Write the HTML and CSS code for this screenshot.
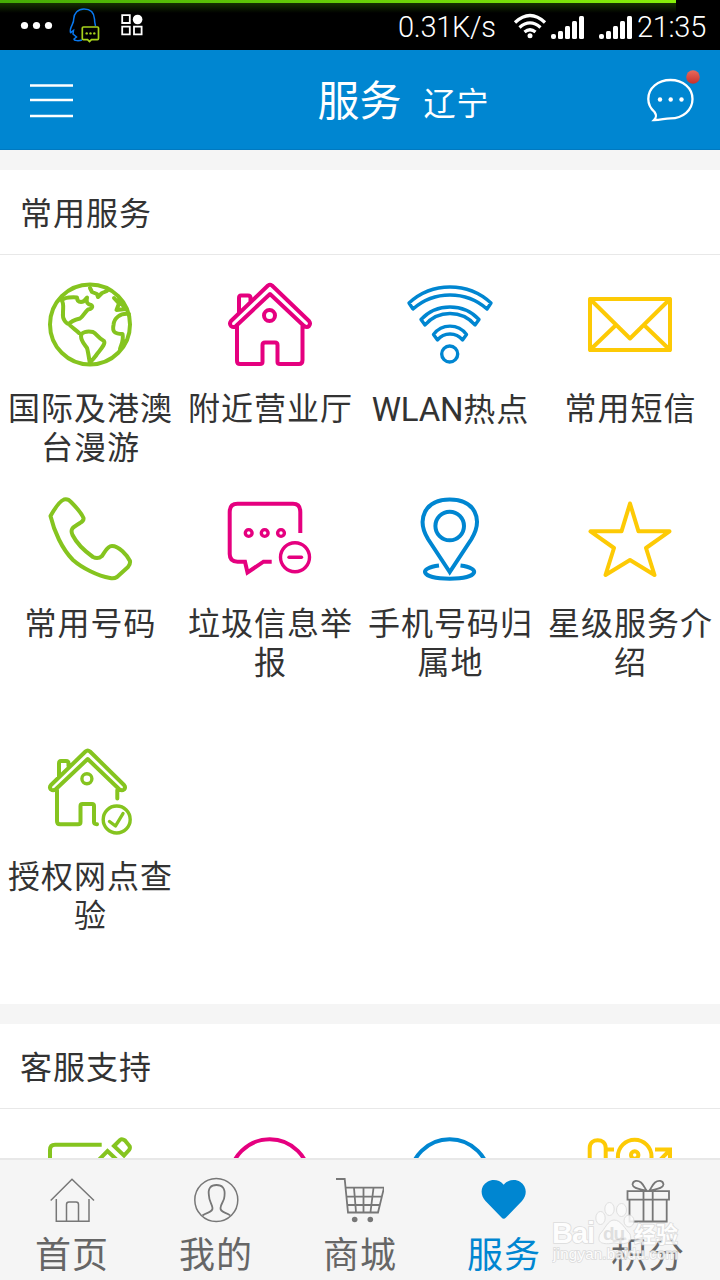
FILE: index.html
```html
<!DOCTYPE html>
<html lang="zh-CN">
<head>
<meta charset="utf-8">
<title>服务</title>
<link rel="stylesheet" href="styles.css">
</head>
<body>
<div class="screen">
  <div class="status">
    <div class="progress"></div>
    <svg class="notices" width="150" height="50" viewBox="0 0 150 50">
      <g fill="#fff"><circle cx="24.5" cy="25.5" r="3.6"/><circle cx="36.5" cy="25.5" r="3.6"/><circle cx="48.5" cy="25.5" r="3.6"/><circle cx="137.6" cy="19.5" r="4.8"/></g>
      <path d="M95.500 26C95 24 94.500 22 94.500 19C94 12 89.500 9 84 9C78 9 74 13 73.700 19C74 23 71.500 25 70.500 29C70 32 70.500 34 71.500 32L73.500 30.500L73 34L76.500 37L74 39C74 41 79 41 82 40" fill="none" stroke="#0878f0" stroke-width="1.500"/>
      <path d="M83.500 27H97.500Q98.500 27 98.500 28V38.500Q98.500 39.700 97.500 39.700H91.500L89.500 41.500L87.500 39.700H83.500Q82.300 39.700 82.300 38.500V28Q82.300 27 83.500 27Z" fill="#000" stroke="#a6d21c" stroke-width="1.700"/>
      <g fill="#a6d21c"><circle cx="86.700" cy="33.400" r="1.200"/><circle cx="90.500" cy="33.400" r="1.200"/><circle cx="94.300" cy="33.400" r="1.200"/></g>
      <path d="M122.200 15.200h7.600v7.800h-7.600ZM122.200 26.700h7.600v7.600h-7.600ZM134 26.700h7.600v7.600h-7.600Z" fill="none" stroke="#fff" stroke-width="1.800"/>
    </svg>
    <div class="status-right">
      <span class="speed">0.31K/s</span>
      <svg class="wifi" width="34" height="26" viewBox="0 0 34 26" fill="none" stroke="#fff" stroke-width="3.300">
        <path d="M2 9.500Q17 -4.500 32 9.500M6.500 14.500Q17 5.300 27.500 14.500M11.500 19Q17 14.500 22.500 19"/><circle cx="17" cy="22.800" r="2.500" fill="#fff" stroke="none"/>
      </svg>
      <svg class="signal" width="34" height="24" viewBox="0 0 34 24" fill="#fff">
        <rect x="0" y="19" width="5" height="5" rx="2"/><rect x="7" y="16" width="5" height="8" rx="1.500"/><rect x="14" y="11" width="5" height="13" rx="1.500"/><rect x="21" y="6" width="5" height="18" rx="1.500"/><rect x="28" y="1" width="5" height="23" rx="1.500"/>
      </svg>
      <svg class="signal second" width="34" height="24" viewBox="0 0 34 24" fill="#fff">
        <rect x="0" y="19" width="5" height="5" rx="2"/><rect x="7" y="16" width="5" height="8" rx="1.500"/><rect x="14" y="11" width="5" height="13" rx="1.500"/><rect x="21" y="6" width="5" height="18" rx="1.500"/><rect x="28" y="1" width="5" height="23" rx="1.500"/>
      </svg>
      <span class="clock">21:35</span>
    </div>
  </div>

  <header class="header">
    <svg class="menu" width="44" height="36" viewBox="0 0 44 36"><path d="M0 2.500H43M0 17H43M0 33H43" stroke="#fff" stroke-width="2.500"/></svg>
    <div class="heading"><h1 class="title">服务</h1><span class="region">辽宁</span></div>
    <svg class="chat" width="56" height="54" viewBox="0 0 56 54">
      <defs><linearGradient id="dot" x2="0" y2="1"><stop offset="0" stop-color="#ea6a5c"/><stop offset="1" stop-color="#c6302b"/></linearGradient></defs>
      <path d="M9 50C12 47 11.500 45 9.500 42C5 38 3.300 34 3.300 29C3.300 18 13 10 25.500 10C38 10 47.500 18 47.500 29C47.500 40 38 48.300 25.500 48.300C19 48.500 16 50 9 50Z" fill="none" stroke="#fff" stroke-width="2.300"/>
      <g fill="#fff"><circle cx="15" cy="29.500" r="2.200"/><circle cx="25.700" cy="29.500" r="2.200"/><circle cx="36.500" cy="29.500" r="2.200"/></g>
      <circle cx="48" cy="7" r="6.800" fill="url(#dot)"/>
    </svg>
  </header>

  <main class="content">
    <section class="panel">
      <h2 class="panel-title">常用服务</h2>
      <div class="grid">
        <div class="item"><svg class="icon green" viewBox="0 0 100 100">
          <circle cx="50" cy="49.500" r="40"/>
          <path d="M22 26C23 22 34 22 37 22.500C37 25 38 27 41 27C45 27 45 24 47 22.500C46 27 47 29 51 30C54 32 51 34 48 34.500C44 38 43 42 40 43.500C34 45 31 46 29 49C27 49 22 45 23 38C23 32 24 29 22 26M29 49C31 52 36 55 39 58M41 61C41 57 47 56 53 57C57 59 58 63 64 66C66 69 60 75 57 79C55 83 50 86 50 89C49 83 48 76 47 73C44 69 41 66 41 61ZM50 13L52 17L57 19L58 22L62 18L67 16M74 23L79 28.500L76.500 35L86 34L78 25M89 39C80 38 74 43 73.500 50C72 57 75 59 82.500 59C84 66 81 70 80 74L86 66"/></svg><div class="label">国际及港澳台漫游</div></div>
        <div class="item"><svg class="icon pink" viewBox="0 0 100 100">
          <path d="M52 10.500Q50 9 48 10.500L11 46Q9 48.500 11 51Q13.500 53 16 51L50 19L84 51Q87 53 89 51Q91 48.500 89 46ZM17 51V86Q17 89 20 89H40Q42.500 89 42.500 87V70Q42.500 67.500 45 67.500H55Q57.500 67.500 57.500 70V87Q57.500 89 60 89H79Q82.500 89 82.500 85V51M19 38V23Q19 20.500 21 20.500H28Q30.500 20.500 30.500 23V27"/><circle cx="49.500" cy="40.500" r="5.500"/></svg><div class="label">附近营业厅</div></div>
        <div class="item"><svg class="icon blue" viewBox="0 0 100 100" >
          <path class="thin" d="M9 28A60.500 60.500 0 0 1 91 28L87 34A56 56 0 0 0 13 34ZM21 44.500A40 40 0 0 1 79 44.500L75 50A33 33 0 0 0 25 50ZM33.500 59.500A20.500 20.500 0 0 1 66.500 59.500L62.500 65A16 16 0 0 0 37.500 65Z"/><circle class="thin" cx="49.700" cy="79" r="8"/></svg><div class="label"><span class="latin">WLAN</span>热点</div></div>
        <div class="item"><svg class="icon yellow" viewBox="0 0 100 100">
          <path d="M10 24H90V75H10ZM10 24L50 63.500L90 24M10 75L36 50M90 75L64 50"/></svg><div class="label">常用短信</div></div>

        <div class="item"><svg class="icon green" viewBox="0 0 100 100">
          <path d="M10.500 26C15 18 20 11 24 9.500Q28 8.500 31 12C36 17 41 22 43.500 28Q44 31 40 33C34 37 29.500 38 32.500 45C37 54 46 62 53 67Q58 69.500 62 66C65 62 67 56 72 56C79 56 87 65 90 71Q90.500 74 88 77L77 87Q74 89 70 88C58 86 42 78 33 70C22 59 14 41 10.500 26Z"/></svg><div class="label">常用号码</div></div>
        <div class="item"><svg class="icon pink" viewBox="0 0 100 100">
          <path class="flat" d="M80.300 43V22Q80.300 13.800 73 13.800H17.500Q9.700 13.800 9.700 22V64Q9.700 71.700 17.500 71.700H25L27.500 82.500L43.500 71.700H51.700"/><circle class="thin" cx="28.700" cy="43" r="3.400"/><circle class="thin" cx="44.700" cy="43" r="3.400"/><circle class="thin" cx="61" cy="43" r="3.400"/><circle class="thin" cx="75" cy="67.300" r="14.500"/><path class="thin" d="M69 67.300H81.500"/></svg><div class="label">垃圾信息举报</div></div>
        <div class="item"><svg class="icon blue" viewBox="0 0 100 100">
          <path class="flat" d="M49.700 82L28 49C16 29 25 9.500 49.700 9.500C75 9.500 83.500 29 71.500 49ZM39 75.500C18 78 20 88.700 49.700 88.700C79 88.700 81 78 60.500 75.500"/><circle cx="49.700" cy="36" r="14.300"/></svg><div class="label">手机号码归属地</div></div>
        <div class="item"><svg class="icon yellow" viewBox="0 0 100 100">
          <path d="M50 13.500L58.500 41.300H89.500L66 58L74.500 85L50 70L25.500 85L34 58L10.500 41.300H41.500Z"/></svg><div class="label">星级服务介绍</div></div>

        <div class="item"><svg class="icon green" viewBox="0 0 100 100">
          <path d="M50 8.500Q47.700 6.500 45.500 8.500L11 42Q9 44.500 11 46.500Q13 48 15.500 46.500L47.700 16L79.500 46.500Q82 48 84 46.500Q86 44.500 84 42ZM17 47V78Q17 81.300 20 81.300H38Q40.500 81.300 40.500 79V63Q40.500 61 42.500 61H52Q54 61 54 63V79Q54 81 57 81.300M77.300 47V55.500M19 34V20.500Q19 18 21 18H26Q28.500 18 28.500 20.500V23"/><circle class="thin" cx="46.900" cy="35.700" r="5"/><circle class="thin" cx="76.700" cy="76.500" r="13.500"/><path class="thin" d="M69.500 78.500L75.500 83L83 70.500"/></svg><div class="label">授权网点查验</div></div>
      </div>
    </section>

    <section class="panel">
      <h2 class="panel-title">客服支持</h2>
      <div class="grid">
        <div class="item"><svg class="icon green" viewBox="0 0 100 100">
          <path class="flat" d="M61.700 15.700H15Q10 15.700 10 21V80H80V50M74 17L80 11Q82 9.500 85 11.500L89.500 17Q90.500 19 89 21L84 26.500ZM40 50L67.500 22L78 32L50 60Z"/></svg></div>
        <div class="item"><svg class="icon pink" viewBox="0 0 100 100"><circle cx="49.700" cy="50" r="39.700"/></svg></div>
        <div class="item"><svg class="icon blue" viewBox="0 0 100 100"><circle cx="49.700" cy="50" r="39.700"/></svg></div>
        <div class="item"><svg class="icon yellow" viewBox="0 0 100 100">
          <path class="flat" d="M9.700 60V19C9.700 8.500 25.700 8.500 25.700 19V60M27 20.500H34M75 20.500H90V34M80 31L89 22"/><circle cx="54.700" cy="27.500" r="16.800"/><circle cx="54.700" cy="26" r="3.700"/></svg></div>
      </div>
    </section>
  </main>

  <nav class="tabs">
    <div class="tab"><svg class="tab-icon" viewBox="0 0 48 48"><path d="M2.700 24.500L24 3.300L46 24.500M8.300 23V45.300H41V23M18.500 45V28.500Q18.500 26 21 26H28Q30.500 26 30.500 28.500V45"/></svg><span>首页</span></div>
    <div class="tab"><svg class="tab-icon" viewBox="0 0 48 48"><circle cx="24.300" cy="24" r="21.500"/><path class="bold" d="M10.500 39.500C14 36 21 37 20.500 32C20 28 17 25 17 20C15.500 12 19 9 24.500 9C30 9 33.500 12 32.500 20C32.500 25 29 27 28.500 32C28 37 35 36 38.300 39.500"/></svg><span>我的</span></div>
    <div class="tab"><svg class="tab-icon" viewBox="0 0 48 48"><path class="bold" d="M0 3H8.700L12 36.500H42L48 11.700H10M10.500 20.700H46M11.500 29H44M18 12L20 36M27.500 12V36M37.500 12L34.500 36"/><circle cx="18.700" cy="43.500" r="2.800" fill="#777" stroke="none"/><circle cx="34.300" cy="43.500" r="2.800" fill="#777" stroke="none"/></svg><span>商城</span></div>
    <div class="tab active"><svg class="tab-icon" viewBox="0 0 48 48"><path d="M23.700 8.700C28 3 36 3 40 5.700C47 10 47.500 19 42 25L26 41.500Q23.700 44 21.500 41.500L5.500 25C0 19 0 10 7.500 5.700C12 3 19 3 23.700 8.700Z" fill="#0086d1" stroke="none"/></svg><span>服务</span></div>
    <div class="tab"><svg class="tab-icon" viewBox="0 0 48 48"><path class="bold" d="M3.500 15.200H45V23.700H3.500ZM5.500 24V45.500H42.700V24M19.500 15.500V45.500M28.700 15.500V45.500M23 15C18 13 9 13 8.500 8.500C9 4 14 4 17 6.500C20 9 21 13 23 15M25 15C30 13 39 13 39.500 8.500C39 4 34 4 31 6.500C28 9 27 13 25 15"/></svg><span>积分</span></div>
  </nav>

  <svg class="watermark" width="136" height="70" viewBox="0 0 136 70">
    <g class="paw">
      <ellipse cx="48.500" cy="18" rx="4.700" ry="6.500"/><ellipse cx="57.500" cy="9" rx="4.700" ry="6.500"/><ellipse cx="69.500" cy="10" rx="5" ry="6.500"/><ellipse cx="77" cy="21" rx="5" ry="6"/>
      <path d="M62 20C56 20 53 29 48 34C44 43 51 45 62 43C74 45 81 43 78 34C73 29 69 20 62 20Z"/>
    </g>
    <text x="0" y="43" textLength="43" class="wm wm-bai">Bai</text>
    <text x="82" y="42" textLength="44" class="wm wm-cn">经验</text>
    <text x="1" y="59" textLength="125" class="wm wm-url">jingyan.baidu.com</text>
    <text x="51" y="40" textLength="22" class="wm-du">du</text>
  </svg>
</div>
</body>
</html>
```
FILE: styles.css
```css
* { box-sizing: border-box; }
body { margin: 0; }
.screen {
  position: relative;
  width: 720px;
  height: 1280px;
  overflow: hidden;
  display: flex;
  flex-direction: column;
  background: #f5f5f5;
  color: #333;
  font-family: Roboto, "Noto Sans CJK SC", sans-serif;
}
svg { display: block; flex: none; }

.status {
  position: relative;
  height: 50px;
  flex: none;
  display: flex;
  justify-content: space-between;
  background: #000;
  color: #fff;
}
.progress {
  position: absolute;
  left: 0;
  top: 0;
  width: 676px;
  height: 13px;
  background:
    linear-gradient(90deg, #45ac05, #87f00a) top / 100% 3px no-repeat,
    linear-gradient(180deg, #1c4200, #000);
}
.notices { position: relative; }
.status-right {
  position: relative;
  display: flex;
  align-items: center;
  padding-right: 12px;
  font-size: 29px;
  font-weight: 300;
  line-height: 50px;
}
.speed { width: 100px; white-space: nowrap; padding-top: 3px; letter-spacing: -0.3px; }
.wifi { margin: 2px 4px 0 15px; }
.signal { margin-top: 3px; }
.second { margin-left: 14px; margin-right: 4px; }
.clock { width: 71px; padding-top: 4px; white-space: nowrap; letter-spacing: -0.3px; }

.header {
  height: 100px;
  flex: none;
  display: flex;
  align-items: center;
  justify-content: space-between;
  padding: 2px 19px 0 30px;
  background: #0086d1;
  border-bottom: 1px solid #0079c0;
  color: #fff;
}
.menu { margin-top: 1px; }
.chat { margin-bottom: 7px; }
.heading { display: flex; align-items: center; gap: 22px; margin-left: 88px; }
.title { margin: 0; padding-top: 3px; font-size: 42px; font-weight: 400; line-height: 60px; }
.region { font-size: 32px; letter-spacing: 1px; }

.content {
  flex: 1;
  min-height: 0;
  overflow: hidden;
  padding-top: 20px;
  display: flex;
  flex-direction: column;
  gap: 20px;
}
.panel { flex: none; background: #fff; }
.panel-title {
  height: 85px;
  margin: 0;
  padding-left: 20px;
  border-bottom: 1px solid #e8e8e8;
  font-size: 32px;
  font-weight: 400;
  letter-spacing: 1px;
  line-height: 88px;
}
.grid {
  display: grid;
  grid-template-columns: repeat(4, 180px);
  grid-template-rows: 215px 253px 281px;
}
.item { padding-top: 20px; display: flex; flex-direction: column; align-items: center; gap: 15px; }
.icon {
  width: 100px;
  height: 100px;
  fill: none;
  stroke: currentColor;
  stroke-width: 4;
  stroke-linejoin: round;
  stroke-linecap: round;
}
.thin { stroke-width: 3.4; }
.flat { stroke-linecap: butt; stroke-linejoin: miter; }
.green { color: #85c41f; }
.pink { color: #e5007f; }
.blue { color: #0086d1; }
.yellow { color: #fdca05; }
.label {
  width: 180px;
  padding-left: 1px;
  text-align: center;
  font-size: 32px;
  letter-spacing: 1px;
  line-height: 39px;
}
.latin { font-size: 33px; letter-spacing: -0.2px; }

.tabs {
  height: 122px;
  flex: none;
  display: grid;
  grid-template-columns: repeat(5, 1fr);
  background: #f5f5f5;
  border-top: 2px solid #e8e8e8;
  color: #666;
}
.tab {
  padding-top: 16px;
  display: flex;
  flex-direction: column;
  align-items: center;
  font-size: 36px;
  letter-spacing: 1px;
  line-height: 65px;
}
.tab.active { color: #0086d1; }
.tab-icon { width: 48px; height: 48px; fill: none; stroke: #777; stroke-width: 1.5; }
.bold { stroke-width: 1.8; }

.watermark { position: absolute; left: 552px; top: 1200px; opacity: 0.85; }
.paw { fill: #fbfbfb; stroke: #dcdcdc; stroke-width: 1; }
.wm { fill: #fff; stroke: #d8d8d8; stroke-width: 1.6; paint-order: stroke; }
.wm-bai { font: 700 29px "Liberation Sans", sans-serif; }
.wm-cn { font: 700 22px "Noto Sans CJK SC", sans-serif; }
.wm-url { font: 15px "Liberation Sans", sans-serif; }
.wm-du { font: 700 19px "Liberation Sans", sans-serif; fill: #dcdcdc; }
```
